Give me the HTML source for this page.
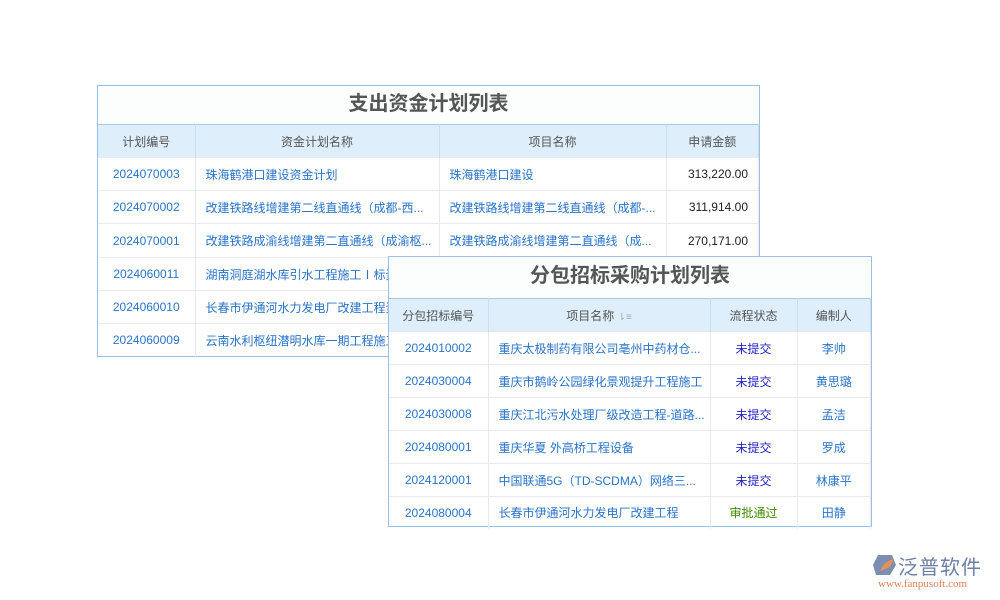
<!DOCTYPE html>
<html><head><meta charset="utf-8"><style>
body{margin:0;width:1000px;height:600px;background:#fff;position:relative;overflow:hidden;font-family:"Liberation Sans","Noto Sans CJK SC",sans-serif;}
.t{position:absolute;background:#fff;border:1px solid #9dbfe6;box-sizing:border-box;}
.t table{border-collapse:collapse;width:100%;table-layout:fixed;font-size:12px;}
.title{text-align:center;font-weight:bold;color:#555;font-size:20px;background:#fcfdfd;}
.t th{background:#deeefb;color:#555;font-weight:normal;border-right:1px solid #c8def4;border-top:1px solid #a8c8ea;}
.t td{color:#2a73c9;border-top:1px solid #e6e9ee;border-right:1px solid #e6e9ee;white-space:nowrap;overflow:hidden;padding:0 10px;}
.c{text-align:center}.r{text-align:right}
.s1{color:#2424c8!important}.s2{color:#3d8a00!important}.p{color:#2a73c9}
</style></head><body>
<div class="t" style="left:97px;top:85px;width:663px;height:272px">
<div class="title" style="height:38px;line-height:36px">支出资金计划列表</div>
<table><colgroup><col style="width:97px"><col style="width:244px"><col style="width:227px"><col></colgroup>
<tr style="height:33px"><th>计划编号</th><th>资金计划名称</th><th>项目名称</th><th>申请金额</th></tr>
<tr style="height:33px"><td class="c">2024070003</td><td>珠海鹤港口建设资金计划</td><td>珠海鹤港口建设</td><td class="r" style="color:#222">313,220.00</td></tr>
<tr style="height:33px"><td class="c">2024070002</td><td>改建铁路线增建第二线直通线（成都-西...</td><td>改建铁路线增建第二线直通线（成都-...</td><td class="r" style="color:#222">311,914.00</td></tr>
<tr style="height:34px"><td class="c">2024070001</td><td>改建铁路成渝线增建第二直通线（成渝枢...</td><td>改建铁路成渝线增建第二直通线（成...</td><td class="r" style="color:#222">270,171.00</td></tr>
<tr style="height:33px"><td class="c">2024060011</td><td>湖南洞庭湖水库引水工程施工Ⅰ标资金计划</td><td></td><td></td></tr>
<tr style="height:33px"><td class="c">2024060010</td><td>长春市伊通河水力发电厂改建工程资金计划</td><td></td><td></td></tr>
<tr style="height:33px"><td class="c">2024060009</td><td>云南水利枢纽潜明水库一期工程施工资金</td><td></td><td></td></tr>
</table></div>
<div class="t" style="left:388px;top:256px;width:484px;height:271px">
<div class="title" style="height:41px;line-height:38px">分包招标采购计划列表</div>
<table><colgroup><col style="width:99px"><col style="width:222px"><col style="width:87px"><col></colgroup>
<tr style="height:33px"><th>分包招标编号</th><th>项目名称 <span style="color:#9ab;font-size:10px">⇂≡</span></th><th>流程状态</th><th>编制人</th></tr>
<tr style="height:33px"><td class="c">2024010002</td><td>重庆太极制药有限公司亳州中药材仓...</td><td class="c s1">未提交</td><td class="c">李帅</td></tr>
<tr style="height:33px"><td class="c">2024030004</td><td>重庆市鹅岭公园绿化景观提升工程施工</td><td class="c s1">未提交</td><td class="c">黄思璐</td></tr>
<tr style="height:33px"><td class="c">2024030008</td><td>重庆江北污水处理厂级改造工程-道路...</td><td class="c s1">未提交</td><td class="c">孟洁</td></tr>
<tr style="height:33px"><td class="c">2024080001</td><td>重庆华夏 外高桥工程设备</td><td class="c s1">未提交</td><td class="c">罗成</td></tr>
<tr style="height:33px"><td class="c">2024120001</td><td>中国联通5G（TD-SCDMA）网络三...</td><td class="c s1">未提交</td><td class="c">林康平</td></tr>
<tr style="height:32px"><td class="c">2024080004</td><td>长春市伊通河水力发电厂改建工程</td><td class="c s2">审批通过</td><td class="c">田静</td></tr>
</table></div>
<svg style="position:absolute;left:872px;top:553px" width="26" height="24"><polygon points="6,2 20,2 24,12 18,22 4,22 1,12" fill="#7d8fb0"/><path d="M8,18 Q12,8 22,6 L18,14 Z" fill="#e8905a"/></svg>
<div style="position:absolute;left:898px;top:551px;font-size:20px;color:#6c7fa5;letter-spacing:1px">泛普软件</div>
<div style="position:absolute;left:878px;top:578px;font-size:11px;color:#e07f55;font-family:'Liberation Serif',serif">www.fanpusoft.com</div>
</body></html>
